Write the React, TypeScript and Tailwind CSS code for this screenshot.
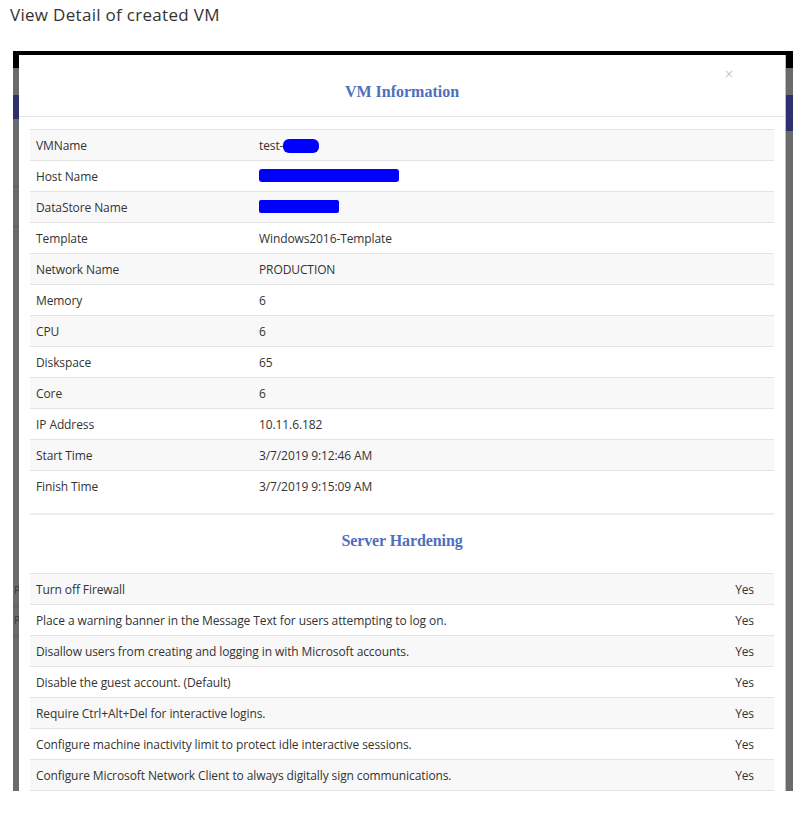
import React from 'react'

const vmRows: { label: string; value: React.ReactNode }[] = [
	{
		label: 'VMName',
		value: (
			<span className="flex items-center">
				test-
				<span className="inline-block w-[36px] h-[14px] bg-[#0000ff] rounded-[6px]" />
			</span>
		),
	},
	{
		label: 'Host Name',
		value: <span className="inline-block w-[140px] h-[13px] bg-[#0000ff] rounded-[3px] mt-[2px]" />,
	},
	{
		label: 'DataStore Name',
		value: <span className="inline-block w-[80px] h-[13px] bg-[#0000ff] rounded-[2px] mt-[2px]" />,
	},
	{ label: 'Template', value: 'Windows2016-Template' },
	{ label: 'Network Name', value: 'PRODUCTION' },
	{ label: 'Memory', value: '6' },
	{ label: 'CPU', value: '6' },
	{ label: 'Diskspace', value: '65' },
	{ label: 'Core', value: '6' },
	{ label: 'IP Address', value: '10.11.6.182' },
	{ label: 'Start Time', value: '3/7/2019 9:12:46 AM' },
	{ label: 'Finish Time', value: '3/7/2019 9:15:09 AM' },
]

const hardening = [
	'Turn off Firewall',
	'Place a warning banner in the Message Text for users attempting to log on.',
	'Disallow users from creating and logging in with Microsoft accounts.',
	'Disable the guest account. (Default)',
	'Require Ctrl+Alt+Del for interactive logins.',
	'Configure machine inactivity limit to protect idle interactive sessions.',
	'Configure Microsoft Network Client to always digitally sign communications.',
]

function SideStrip({ navy, right }: { navy: number; right?: boolean }) {
	return (
		<div
			className={`flex flex-col ${right ? 'w-[8px] border-l border-[#bdbdbd]' : 'w-[6px]'}`}
		>
			<div className="h-[13px] bg-black" />
			<div className="h-[27px] bg-[#6b6b6b]" />
			<div className="bg-[#2f306f]" style={{ height: navy }} />
			<div className="flex-1 bg-[#6b6b6b]">
				{!right && (
					<div className="flex flex-col text-[10px] leading-none text-[#3a3a3a] font-['Open_Sans',sans-serif]">
						<div className="h-[68px] border-b border-[#5c5c5c]" />
						<div className="h-[40px] border-b border-[#5c5c5c]" />
						<div className="h-[350px]" />
						<div className="h-[30px] border-b border-[#5c5c5c] pt-[8px] pl-[1px]">P</div>
						<div className="h-[30px] border-b border-[#5c5c5c] pt-[8px] pl-[1px]">P</div>
					</div>
				)}
			</div>
		</div>
	)
}

function SectionTitle({ children }: { children: React.ReactNode }) {
	return (
		<h4 className="text-center font-['Liberation_Serif',serif] font-bold text-[16px] text-[#4d6fbd]">
			{children}
		</h4>
	)
}

export default function App() {
	return (
		<div className="min-h-[813px] bg-white">
			<p className="pl-[10px] pt-[4px] text-[17px] leading-[21px] tracking-[0.3px] text-[#333] font-['Open_Sans',sans-serif]">
				View Detail of created VM
			</p>

			<div className="ml-[13px] mt-[26px] w-[780px] h-[740px] flex flex-col overflow-hidden">
				<div className="h-[5px] bg-black" />
				<div className="flex flex-1">
					<SideStrip navy={24} />

					<div className="w-[766px] bg-white flex flex-col">
						<div className="relative h-[62px] border-b border-[#e5e5e5] flex items-center justify-center pt-[14px]">
							<SectionTitle>VM Information</SectionTitle>
							<span className="absolute left-[705px] top-[10px] text-[12px] text-[#c8c8c8] font-['DejaVu_Sans',sans-serif]">
								×
							</span>
						</div>

						<div className="px-[11px] pt-[12px] font-['Open_Sans',sans-serif] text-[12px] tracking-[-0.1px] text-[#333]">
							<table className="w-full border-collapse">
								<tbody>
									{vmRows.map((row, idx) => (
										<tr
											key={row.label}
											className={`h-[31px] border-t border-[#e3e3e3] ${idx % 2 === 0 ? 'bg-[#f8f8f8]' : ''}`}
										>
											<td className="w-[229px] pl-[6px] pt-[2px]">{row.label}</td>
											<td className="pt-[2px]">{row.value}</td>
										</tr>
									))}
								</tbody>
							</table>

							<div className="mt-[12px] border-t-2 border-[#eeeeee] h-[60px] flex items-center justify-center pb-[6px]">
								<SectionTitle>Server Hardening</SectionTitle>
							</div>

							<table className="w-full border-collapse">
								<tbody>
									{hardening.map((item, idx) => (
										<tr
											key={item}
											className={`h-[31px] border-t border-b border-[#e3e3e3] ${idx % 2 === 0 ? 'bg-[#f8f8f8]' : ''}`}
										>
											<td className="pl-[6px] pt-[2px]">{item}</td>
											<td className="text-right pr-[20px] pt-[2px]">Yes</td>
										</tr>
									))}
								</tbody>
							</table>
						</div>
					</div>

					<SideStrip navy={36} right />
				</div>
			</div>
		</div>
	)
}
